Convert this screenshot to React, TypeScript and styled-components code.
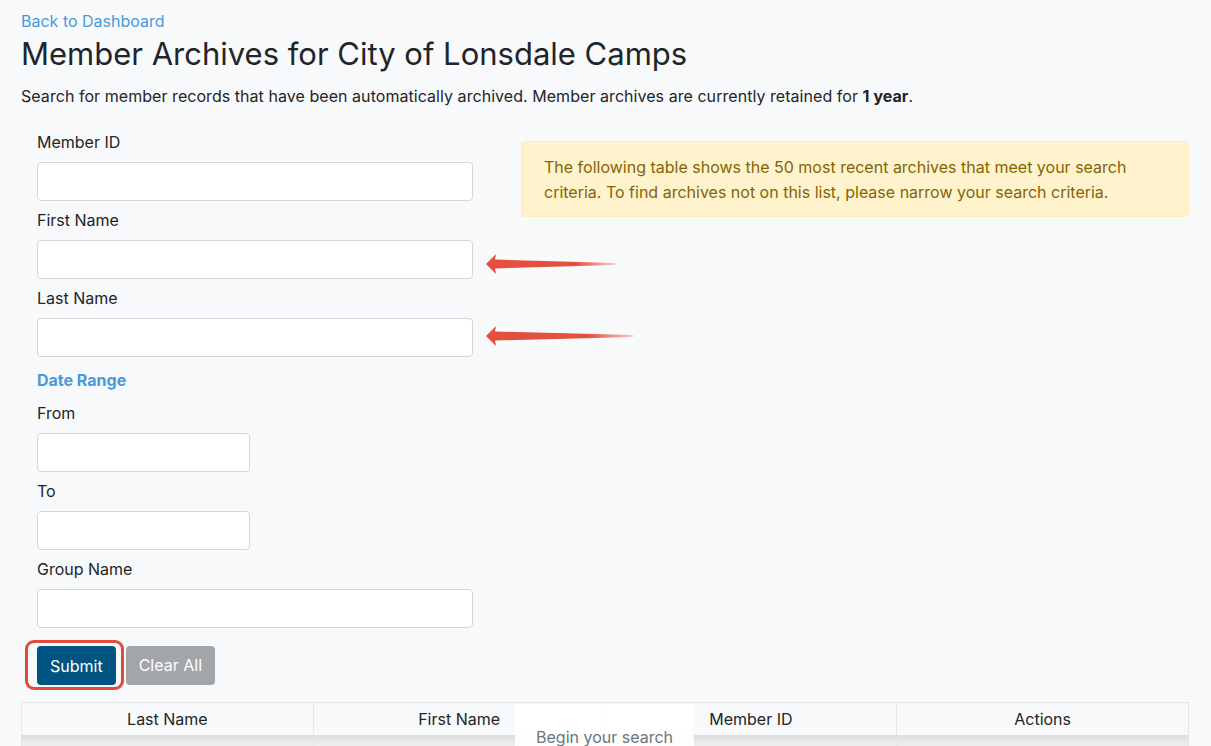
import React from "react";
import styled, { createGlobalStyle } from "styled-components";

const GlobalStyle = createGlobalStyle`
  html, body {
    margin: 0;
    padding: 0;
    background: #f8f9fb;
  }
  body {
    font-family: Inter, "Liberation Sans", Arial, sans-serif;
    color: #212529;
    font-size: 16px;
  }
  * {
    box-sizing: border-box;
  }
`;

const Page = styled.div`
  padding: 11px 22px 0 21px;
  height: 746px;
  overflow: hidden;
`;

const BackLink = styled.a`
  display: block;
  color: #4a9ad8;
  text-decoration: none;
  font-size: 16px;
  line-height: 20px;
`;

const Title = styled.h1`
  margin: 4px 0 0;
  font-size: 31px;
  font-weight: 400;
  line-height: 38px;
`;

const Intro = styled.p`
  margin: 11px 0 0;
  font-size: 16px;
  line-height: 24px;
  letter-spacing: 0.05px;
`;

const Layout = styled.div`
  display: grid;
  grid-template-columns: 468px 1fr;
  gap: 32px;
  margin-top: 22px;
`;

const FormColumn = styled.form`
  padding-left: 16px;
  display: flex;
  flex-direction: column;
`;

const Field = styled.div`
  display: flex;
  flex-direction: column;
  margin-bottom: 7px;
`;

const Label = styled.label`
  font-size: 16px;
  line-height: 24px;
  margin-bottom: 8px;
`;

const Input = styled.input<{ $narrow?: boolean }>`
  width: ${(p) => (p.$narrow ? "213px" : "436px")};
  height: 39px;
  background: #fff;
  border: 1px solid #d3d6da;
  border-radius: 4px;
  padding: 6px 12px;
  font: inherit;
`;

const SectionTitle = styled.div`
  color: #4a9ad8;
  font-weight: 700;
  font-size: 16px;
  line-height: 24px;
  margin: 4px 0 9px;
`;

const ButtonRow = styled.div`
  display: flex;
  align-items: center;
  margin-top: 5px;
`;

const Highlight = styled.span`
  display: inline-flex;
  margin-left: -12px;
  padding: 3px 5px 2px 9px;
  border: 3px solid #e04b3b;
  border-radius: 9px;
`;

const Button = styled.button<{ $variant: "primary" | "muted" }>`
  height: 39px;
  padding: 0 13px;
  border: none;
  border-radius: 4px;
  font: inherit;
  font-size: 16px;
  color: #fff;
  background: ${(p) => (p.$variant === "primary" ? "#005482" : "#a2a5aa")};
  margin-left: ${(p) => (p.$variant === "muted" ? "2px" : "0")};
`;

const Alert = styled.div`
  margin-top: 11px;
  background: #fff3cd;
  border: 1px solid #ffeeba;
  border-radius: 4px;
  color: #856404;
  padding: 13px 22px 11px;
  font-size: 16px;
  line-height: 25px;
  align-self: start;
`;

const ArrowCol = styled.div`
  position: relative;
`;

const ArrowMark = styled.svg`
  position: absolute;
  left: -36px;
`;

const TableWrap = styled.div`
  position: relative;
  margin-top: 12px;
  width: 1168px;
`;

const Table = styled.table`
  width: 100%;
  border-collapse: collapse;
  table-layout: fixed;
`;

const Th = styled.th`
  height: 32px;
  font-weight: 400;
  font-size: 16px;
  text-align: center;
  background: #f8f9fa;
  border: 1px solid #e3e5e8;
  border-bottom: none;
`;

const BodyCell = styled.td`
  height: 20px;
  background: linear-gradient(#dcdcdc, #ececec 8px, #ededed);
  border-left: 1px solid #e3e5e8;
  border-right: 1px solid #e3e5e8;
`;

const EmptyOverlay = styled.div`
  position: absolute;
  left: 494px;
  top: 2px;
  width: 179px;
  height: 60px;
  background: rgba(255, 255, 255, 0.92);
  color: #6c757d;
  font-size: 16px;
  text-align: center;
  padding-top: 23px;
`;

const Arrow = ({ top, length }: { top: number; length: number }) => (
  <ArrowMark
    width={length + 2}
    height={22}
    viewBox={`0 0 ${length + 2} 22`}
    style={{ top }}
  >
    <defs>
      <linearGradient id={`fade${top}`} x1="0" x2="1" y1="0" y2="0">
        <stop offset="0" stopColor="#e4503e" />
        <stop offset="0.7" stopColor="#e4503e" />
        <stop offset="1" stopColor="#e4503e" stopOpacity="0.25" />
      </linearGradient>
    </defs>
    <path
      d={`M1 11 L11 1 L10 6.5 L${length} 10 L${length} 12 L10 15.5 L11 21 Z`}
      fill={`url(#fade${top})`}
    />
  </ArrowMark>
);

const fields = [
  { label: "Member ID" },
  { label: "First Name" },
  { label: "Last Name" },
];

export default function App() {
  return (
    <Page>
      <GlobalStyle />
      <BackLink href="#">Back to Dashboard</BackLink>
      <Title>Member Archives for City of Lonsdale Camps</Title>
      <Intro>
        Search for member records that have been automatically archived.
        Member archives are currently retained for <b>1 year</b>.
      </Intro>
      <Layout>
        <FormColumn onSubmit={(e) => e.preventDefault()}>
          {fields.map((f) => (
            <Field key={f.label}>
              <Label>{f.label}</Label>
              <Input />
            </Field>
          ))}
          <SectionTitle>Date Range</SectionTitle>
          <Field>
            <Label>From</Label>
            <Input $narrow />
          </Field>
          <Field>
            <Label>To</Label>
            <Input $narrow />
          </Field>
          <Field>
            <Label>Group Name</Label>
            <Input />
          </Field>
          <ButtonRow>
            <Highlight>
              <Button $variant="primary">Submit</Button>
            </Highlight>
            <Button $variant="muted" type="button">
              Clear All
            </Button>
          </ButtonRow>
        </FormColumn>
        <ArrowCol>
          <Alert>
            The following table shows the 50 most recent archives that meet
            your search criteria. To find archives not on this list, please
            narrow your search criteria.
          </Alert>
          <Arrow top={123} length={130} />
          <Arrow top={195} length={148} />
        </ArrowCol>
      </Layout>
      <TableWrap>
        <Table>
          <thead>
            <tr>
              <Th>Last Name</Th>
              <Th>First Name</Th>
              <Th>Member ID</Th>
              <Th>Actions</Th>
            </tr>
          </thead>
          <tbody>
            <tr>
              <BodyCell />
              <BodyCell />
              <BodyCell />
              <BodyCell />
            </tr>
          </tbody>
        </Table>
        <EmptyOverlay>Begin your search</EmptyOverlay>
      </TableWrap>
    </Page>
  );
}
